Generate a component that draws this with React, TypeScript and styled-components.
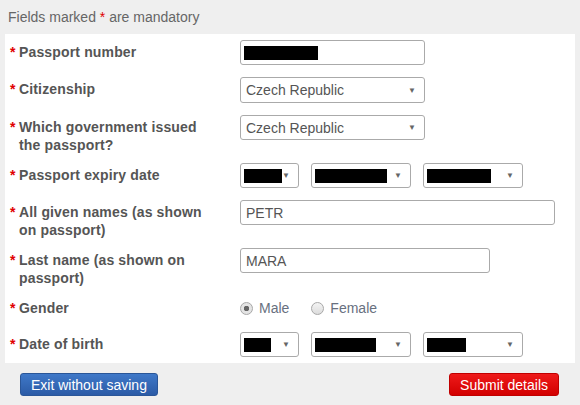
import React from "react";
import styled, { createGlobalStyle } from "styled-components";

const GlobalStyle = createGlobalStyle`
  body {
    margin: 0;
    background: #efefef;
    font-family: "Liberation Sans", Arial, sans-serif;
  }
`;

type FieldKind = "text" | "select";

interface RowProps {
  label: string;
  children: React.ReactNode;
}

const FormRow: React.FC<RowProps> = ({ label, children }) => (
  <StyledRow>
    <StyledLabel>
      <StyledStar>*</StyledStar>
      <StyledLabelText>{label}</StyledLabelText>
    </StyledLabel>
    <StyledControls>{children}</StyledControls>
  </StyledRow>
);

interface FieldProps {
  kind: FieldKind;
  width: number;
  value?: string;
  hidden?: number;
  tall?: boolean;
}

const Field: React.FC<FieldProps> = ({ kind, width, value, hidden, tall }) => (
  <StyledField $width={width} $tall={tall}>
    {hidden ? <StyledRedacted style={{ width: hidden }} /> : <StyledValue>{value}</StyledValue>}
    {kind === "select" && <StyledCaret>▼</StyledCaret>}
  </StyledField>
);

const App: React.FC = () => {
  return (
    <>
      <GlobalStyle />
      <StyledHeader>
        Fields marked <StyledHeaderStar>*</StyledHeaderStar> are mandatory
      </StyledHeader>
      <StyledPanel>
        <FormRow label="Passport number">
          <Field kind="text" width={185} hidden={74} />
        </FormRow>
        <FormRow label="Citizenship">
          <Field kind="select" width={185} value="Czech Republic" tall />
        </FormRow>
        <FormRow label="Which government issued the passport?">
          <Field kind="select" width={185} value="Czech Republic" />
        </FormRow>
        <FormRow label="Passport expiry date">
          <Field kind="select" width={59} hidden={41} />
          <Field kind="select" width={100} hidden={72} />
          <Field kind="select" width={100} hidden={64} />
        </FormRow>
        <FormRow label="All given names (as shown on passport)">
          <Field kind="text" width={315} value="PETR" />
        </FormRow>
        <FormRow label="Last name (as shown on passport)">
          <Field kind="text" width={250} value="MARA" />
        </FormRow>
        <FormRow label="Gender">
          <StyledRadioGroup>
            <StyledRadioOption>
              <StyledRadio $checked />
              Male
            </StyledRadioOption>
            <StyledRadioOption>
              <StyledRadio />
              Female
            </StyledRadioOption>
          </StyledRadioGroup>
        </FormRow>
        <FormRow label="Date of birth">
          <Field kind="select" width={59} hidden={27} />
          <Field kind="select" width={100} hidden={61} />
          <Field kind="select" width={100} hidden={39} />
        </FormRow>
      </StyledPanel>
      <StyledActions>
        <StyledButton $variant="blue">Exit without saving</StyledButton>
        <StyledButton $variant="red">Submit details</StyledButton>
      </StyledActions>
    </>
  );
};

export default App;

const StyledHeader = styled.div`
  height: 34px;
  display: flex;
  align-items: center;
  white-space: pre;
  padding-left: 8px;
  font-size: 14px;
  color: #666;
`;

const StyledHeaderStar = styled.span`
  color: #e00000;
`;

const StyledPanel = styled.div`
  margin: 0 5px;
  padding: 6px 5px 0;
  background: #fff;
`;

const StyledRow = styled.div`
  display: grid;
  grid-template-columns: 230px 1fr;

  &:last-child > div:last-child {
    padding-bottom: 6px;
  }
`;

const StyledLabel = styled.div`
  display: flex;
  padding: 3px 0 9px;
  font-size: 14px;
  line-height: 18px;
  font-weight: bold;
  color: #555;
`;

const StyledStar = styled.span`
  color: #e00000;
  font-weight: bold;
  width: 9px;
  flex: none;
`;

const StyledLabelText = styled.span`
  max-width: 195px;
  letter-spacing: 0.15px;
`;

const StyledControls = styled.div`
  display: flex;
  align-items: flex-start;
  gap: 12px;
  padding-bottom: 12px;
`;

const StyledField = styled.div<{ $width: number; $tall?: boolean }>`
  box-sizing: border-box;
  width: ${(p) => p.$width}px;
  height: ${(p) => (p.$tall ? 26 : 25)}px;
  display: flex;
  align-items: center;
  padding: 0 8px 0 5px;
  border: 1px solid #aaa;
  border-radius: 3px;
  background: #fff;
`;

const StyledValue = styled.span`
  flex: 1;
  font-size: 14px;
  color: #555;
`;

const StyledRedacted = styled.span`
  height: 14px;
  margin-left: -2px;
  background: #000;
`;

const StyledCaret = styled.span`
  margin-left: auto;
  font-size: 8px;
  color: #666;
`;

const StyledRadioGroup = styled.div`
  height: 24px;
  display: flex;
  align-items: center;
  gap: 22px;
`;

const StyledRadioOption = styled.label`
  display: flex;
  align-items: center;
  gap: 6px;
  font-size: 14px;
  color: #687080;
`;

const StyledRadio = styled.span<{ $checked?: boolean }>`
  box-sizing: border-box;
  width: 13px;
  height: 13px;
  border-radius: 50%;
  border: 1px solid #a8a8a8;
  background: radial-gradient(circle, #666 0 2.5px, #e4e4e4 3px);
  ${(p) => !p.$checked && "background: linear-gradient(#f4f4f4, #dcdcdc);"}
`;

const StyledActions = styled.div`
  display: flex;
  justify-content: space-between;
  padding: 10px 21px 0 20px;
`;

const StyledButton = styled.button<{ $variant: "blue" | "red" }>`
  height: 23px;
  padding: 0 10px;
  border: 1px solid ${(p) => (p.$variant === "blue" ? "#2a5698" : "#c00000")};
  border-radius: 3px;
  font-family: "Liberation Sans", Arial, sans-serif;
  font-size: 14px;
  color: #fff;
  background: ${(p) =>
    p.$variant === "blue"
      ? "linear-gradient(#3f78c8, #2b5ba6)"
      : "linear-gradient(#ee1a1a, #d20000)"};
`;
